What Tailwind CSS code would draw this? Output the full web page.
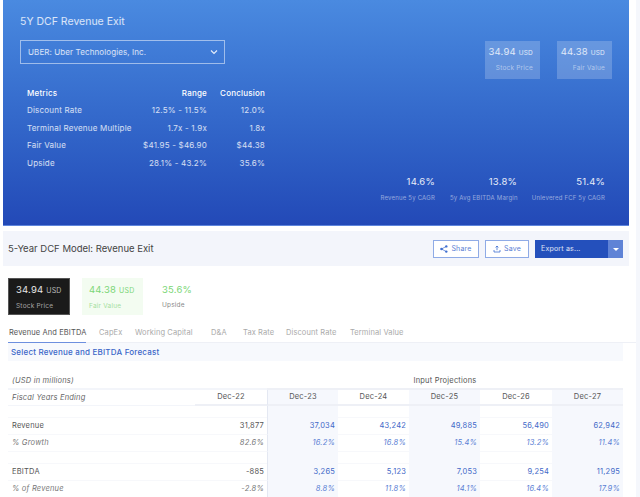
<!DOCTYPE html>
<html lang="en">
<head>
<meta charset="UTF-8" />
<title>5Y DCF Revenue Exit</title>
<script src="https://cdn.jsdelivr.net/npm/@tailwindcss/browser@4"></script>
</head>
<body class="w-[640px] h-[497px] overflow-hidden bg-[#f5f7fc] font-['Inter','Open_Sans',sans-serif] text-[8px] tracking-[0.2px]">
<div class="flex h-full">
  <div class="w-[3px] shrink-0 bg-white"></div>
  <div class="w-[633px] shrink-0 bg-white">
    <!-- hero -->
    <div class="w-[626px] h-[226px] bg-gradient-to-b from-[#4a8ae0] to-[#2349b7] border-b border-[#5f86dc] pt-[14px] pl-[17px] pr-[17px] text-white">
      <div class="flex justify-between h-[188px]">
        <div class="w-[270px]">
          <h1 class="text-[10.5px] leading-[15px] tracking-[0px] text-white/80">5Y DCF Revenue Exit</h1>
          <div class="mt-[11px] w-[205px] h-[24px] border border-white/50 flex items-center justify-between pl-[7px] pr-[4px] text-[8px] tracking-[0.1px] text-white/80">
            <span>UBER: Uber Technologies, Inc.</span>
            <svg class="w-[12px] h-[12px]" viewBox="0 0 12 12" fill="none" stroke="#fff" stroke-opacity="0.85" stroke-width="1.2"><path d="M3 4.5l3 3 3-3" /></svg>
          </div>
          <div class="mt-[20px] ml-[7px] w-[238px] text-white/80 whitespace-nowrap">
            <div class="grid grid-cols-[104px_76px_58px] font-medium text-white h-[17.5px] items-center"><span>Metrics</span><span class="text-right">Range</span><span class="text-right">Conclusion</span></div>
            <div class="grid grid-cols-[104px_76px_58px] h-[17.5px] items-center"><span>Discount Rate</span><span class="text-right">12.5% - 11.5%</span><span class="text-right">12.0%</span></div>
            <div class="grid grid-cols-[104px_76px_58px] h-[17.5px] items-center"><span>Terminal Revenue Multiple</span><span class="text-right">1.7x - 1.9x</span><span class="text-right">1.8x</span></div>
            <div class="grid grid-cols-[104px_76px_58px] h-[17.5px] items-center"><span>Fair Value</span><span class="text-right">$41.95 - $46.90</span><span class="text-right">$44.38</span></div>
            <div class="grid grid-cols-[104px_76px_58px] h-[17.5px] items-center"><span>Upside</span><span class="text-right">28.1% - 43.2%</span><span class="text-right">35.6%</span></div>
          </div>
        </div>
        <div class="flex flex-col justify-between items-end">
          <div class="flex gap-[17px] mt-[27px]">
            <div class="w-[55px] h-[38px] bg-white/20 pr-[7px] pt-[5px] text-right">
              <div class="text-[9.5px] leading-[12px] text-white/80">34.94 <span class="text-[6.5px]">USD</span></div>
              <div class="mt-[5px] text-[6.5px] text-white/50">Stock Price</div>
            </div>
            <div class="w-[55px] h-[38px] bg-white/20 pr-[7px] pt-[5px] text-right">
              <div class="text-[9.5px] leading-[12px] text-white/80">44.38 <span class="text-[6.5px]">USD</span></div>
              <div class="mt-[5px] text-[6.5px] text-white/50">Fair Value</div>
            </div>
          </div>
          <div class="flex pr-[7px]">
            <div class="w-[67px] text-right"><div class="text-[9.5px] leading-[12px] text-white/90">14.6%</div><div class="mt-[5px] text-[6px] text-white/50 whitespace-nowrap">Revenue 5y CAGR</div></div>
            <div class="w-[67px] ml-[15px] text-right"><div class="text-[9.5px] leading-[12px] text-white/90">13.8%</div><div class="mt-[5px] text-[6px] text-white/50 whitespace-nowrap">5y Avg EBITDA Margin</div></div>
            <div class="w-[74px] ml-[14px] text-right"><div class="text-[9.5px] leading-[12px] text-white/90">51.4%</div><div class="mt-[5px] text-[6px] text-white/50 whitespace-nowrap">Unlevered FCF 5y CAGR</div></div>
          </div>
        </div>
      </div>
    </div>

    <!-- section header -->
    <div class="w-[626px] h-[35px] mt-[5px] pt-[1px] bg-[#f3f5fb] flex items-center justify-between pl-[5px] pr-[6px]">
      <h2 class="text-[9.5px] text-[#444] tracking-[0px]">5-Year DCF Model: Revenue Exit</h2>
      <div class="flex gap-[6px] text-[7px] text-[#5a80d4]">
        <div class="w-[46px] h-[18px] bg-white border border-[#8fabe6] flex items-center justify-center gap-[3px]">
          <svg class="w-[8px] h-[8px]" viewBox="0 0 8 8" fill="#3f6fd0"><circle cx="1.5" cy="4" r="1.3"/><circle cx="6.3" cy="1.4" r="1.2"/><circle cx="6.3" cy="6.6" r="1.2"/><path d="M1.5 4l4.8-2.6M1.5 4l4.8 2.6" stroke="#3f6fd0" stroke-width="0.7"/></svg>
          <span>Share</span>
        </div>
        <div class="w-[44px] h-[18px] bg-white border border-[#8fabe6] flex items-center justify-center gap-[3px]">
          <svg class="w-[8px] h-[8px]" viewBox="0 0 8 8" fill="none" stroke="#3f6fd0" stroke-width="0.8"><path d="M4 5.2V1M2.6 2.4L4 1l1.4 1.4M1 5v2h6V5"/></svg>
          <span>Save</span>
        </div>
        <div class="w-[88px] h-[18px] flex text-white/85">
          <div class="flex-1 bg-[#2450bc] flex items-center pl-[6px]">Export as...</div>
          <div class="w-[15px] bg-[#5f83d6] flex items-center justify-center"><span class="w-0 h-0 border-x-[3px] border-x-transparent border-t-[3px] border-t-white"></span></div>
        </div>
      </div>
    </div>

    <!-- value cards -->
    <div class="flex gap-[12px] pl-[5px] mt-[12px] h-[37px]">
      <div class="w-[62px] bg-[#1a1a1a] border border-[#555] pl-[7px] pt-[5px] text-white/90">
        <div class="text-[9.5px] leading-[12px]">34.94 <span class="text-[7px] text-white/70">USD</span></div>
        <div class="mt-[5px] text-[6.5px] text-white/60">Stock Price</div>
      </div>
      <div class="w-[61px] bg-[#f3fcf1] pl-[7px] pt-[6px] text-[#7bd676]">
        <div class="text-[9.5px] leading-[12px]">44.38 <span class="text-[7px]">USD</span></div>
        <div class="mt-[5px] text-[6.5px] text-[#a5e0a0]">Fair Value</div>
      </div>
      <div class="pl-[7px] pt-[6px] text-[#7bd676]">
        <div class="text-[9.5px] leading-[12px]">35.6%</div>
        <div class="mt-[5px] text-[6.5px] text-[#888]">Upside</div>
      </div>
    </div>

    <!-- tabs -->
    <div class="flex mt-[9px] ml-[5px] h-[19px] w-[628px] border-b border-[#eef0f6] text-[7.5px] tracking-[0.1px] text-[#aaa] whitespace-nowrap">
      <div class="w-[78px] pl-[1px] text-[#555] border-b border-[#6d8fdf] h-[19px] leading-[17px]">Revenue And EBITDA</div>
      <div class="w-[36px] ml-[13px] leading-[17px]">CapEx</div>
      <div class="w-[76px] leading-[17px]">Working Capital</div>
      <div class="w-[32px] leading-[17px]">D&amp;A</div>
      <div class="w-[43px] leading-[17px]">Tax Rate</div>
      <div class="w-[64px] leading-[17px]">Discount Rate</div>
      <div class="leading-[17px]">Terminal Value</div>
    </div>

    <!-- forecast selector -->
    <div class="w-[615px] ml-[5px] h-[18px] bg-[#f7f9fd] pl-[3px] flex items-center text-[8px] font-medium text-[#3a66c8]">Select Revenue and EBITDA Forecast</div>

    <!-- table -->
    <div class="w-[615px] ml-[5px] mt-[12px] grid grid-cols-[187px_72px_71px_71px_71px_72px_71px] text-[7.5px] text-[#555]">
      <div class="h-[17px] flex items-center pl-[4px] italic text-[#666] border-b-2 border-[#f3f5fa]">(USD in millions)</div>
      <div class="border-b-2 border-[#f3f5fa]"></div>
      <div class="col-span-5 flex items-center justify-center text-[#555] border-b-2 border-[#eef0f6]">Input Projections</div>

      <div class="h-[16px] flex items-center pl-[4px] italic text-[#666] border-b border-[#f3f5fa]">Fiscal Years Ending</div>
      <div class="flex items-center justify-center border-b-2 border-[#eef0f6]">Dec-22</div>
      <div class="flex items-center justify-center bg-[#f6f8fd] border-l border-[#e4e8f2] border-b-2 border-b-[#eef0f6]">Dec-23</div>
      <div class="flex items-center justify-center border-b-2 border-[#eef0f6]">Dec-24</div>
      <div class="flex items-center justify-center bg-[#f6f8fd] border-b-2 border-[#eef0f6]">Dec-25</div>
      <div class="flex items-center justify-center border-b-2 border-[#eef0f6]">Dec-26</div>
      <div class="flex items-center justify-center bg-[#f6f8fd] border-b-2 border-[#eef0f6]">Dec-27</div>

      <div class="h-[12px] col-span-2 border-b border-[#f7f8fb]"></div>
      <div class="bg-[#f6f8fd] border-l border-[#e4e8f2]"></div><div class="border-b border-[#f7f8fb]"></div><div class="bg-[#f6f8fd]"></div><div class="border-b border-[#f7f8fb]"></div><div class="bg-[#f6f8fd]"></div>

      <div class="h-[17px] flex items-center pl-[4px] border-b border-[#f7f8fb]">Revenue</div>
      <div class="flex items-center justify-end pr-[3px] border-b border-[#f7f8fb]">31,877</div>
      <div class="flex items-center justify-end pr-[3px] text-[#3f68c8] bg-[#f6f8fd] border-l border-[#e4e8f2] border-b border-b-[#f6f8fd]">37,034</div>
      <div class="flex items-center justify-end pr-[3px] text-[#3f68c8] border-b border-[#f7f8fb]">43,242</div>
      <div class="flex items-center justify-end pr-[3px] text-[#3f68c8] bg-[#f6f8fd] border-b border-[#f6f8fd]">49,885</div>
      <div class="flex items-center justify-end pr-[3px] text-[#3f68c8] border-b border-[#f7f8fb]">56,490</div>
      <div class="flex items-center justify-end pr-[3px] text-[#3f68c8] bg-[#f6f8fd] border-b border-[#f6f8fd]">62,942</div>

      <div class="h-[17px] flex items-center pl-[4px] italic text-[#777] border-b border-[#f7f8fb]">% Growth</div>
      <div class="flex items-center justify-end pr-[3px] italic text-[#777] border-b border-[#f7f8fb]">82.6%</div>
      <div class="flex items-center justify-end pr-[3px] italic text-[#5a80d4] bg-[#f6f8fd] border-l border-[#e4e8f2] border-b border-b-[#f6f8fd]">16.2%</div>
      <div class="flex items-center justify-end pr-[3px] italic text-[#5a80d4] border-b border-[#f7f8fb]">16.8%</div>
      <div class="flex items-center justify-end pr-[3px] italic text-[#5a80d4] bg-[#f6f8fd] border-b border-[#f6f8fd]">15.4%</div>
      <div class="flex items-center justify-end pr-[3px] italic text-[#5a80d4] border-b border-[#f7f8fb]">13.2%</div>
      <div class="flex items-center justify-end pr-[3px] italic text-[#5a80d4] bg-[#f6f8fd] border-b border-[#f6f8fd]">11.4%</div>

      <div class="h-[12px] col-span-2 border-b border-[#f7f8fb]"></div>
      <div class="bg-[#f6f8fd] border-l border-[#e4e8f2]"></div><div class="border-b border-[#f7f8fb]"></div><div class="bg-[#f6f8fd]"></div><div class="border-b border-[#f7f8fb]"></div><div class="bg-[#f6f8fd]"></div>

      <div class="h-[17px] flex items-center pl-[4px] border-b border-[#f7f8fb]">EBITDA</div>
      <div class="flex items-center justify-end pr-[3px] border-b border-[#f7f8fb]">-885</div>
      <div class="flex items-center justify-end pr-[3px] text-[#3f68c8] bg-[#f6f8fd] border-l border-[#e4e8f2] border-b border-b-[#f6f8fd]">3,265</div>
      <div class="flex items-center justify-end pr-[3px] text-[#3f68c8] border-b border-[#f7f8fb]">5,123</div>
      <div class="flex items-center justify-end pr-[3px] text-[#3f68c8] bg-[#f6f8fd] border-b border-[#f6f8fd]">7,053</div>
      <div class="flex items-center justify-end pr-[3px] text-[#3f68c8] border-b border-[#f7f8fb]">9,254</div>
      <div class="flex items-center justify-end pr-[3px] text-[#3f68c8] bg-[#f6f8fd] border-b border-[#f6f8fd]">11,295</div>

      <div class="h-[17px] flex items-center pl-[4px] italic text-[#777] border-b border-[#f7f8fb]">% of Revenue</div>
      <div class="flex items-center justify-end pr-[3px] italic text-[#777] border-b border-[#f7f8fb]">-2.8%</div>
      <div class="flex items-center justify-end pr-[3px] italic text-[#5a80d4] bg-[#f6f8fd] border-l border-[#e4e8f2] border-b border-b-[#f6f8fd]">8.8%</div>
      <div class="flex items-center justify-end pr-[3px] italic text-[#5a80d4] border-b border-[#f7f8fb]">11.8%</div>
      <div class="flex items-center justify-end pr-[3px] italic text-[#5a80d4] bg-[#f6f8fd] border-b border-[#f6f8fd]">14.1%</div>
      <div class="flex items-center justify-end pr-[3px] italic text-[#5a80d4] border-b border-[#f7f8fb]">16.4%</div>
      <div class="flex items-center justify-end pr-[3px] italic text-[#5a80d4] bg-[#f6f8fd] border-b border-[#f6f8fd]">17.9%</div>
    </div>
  </div>
</div>
</body>
</html>
